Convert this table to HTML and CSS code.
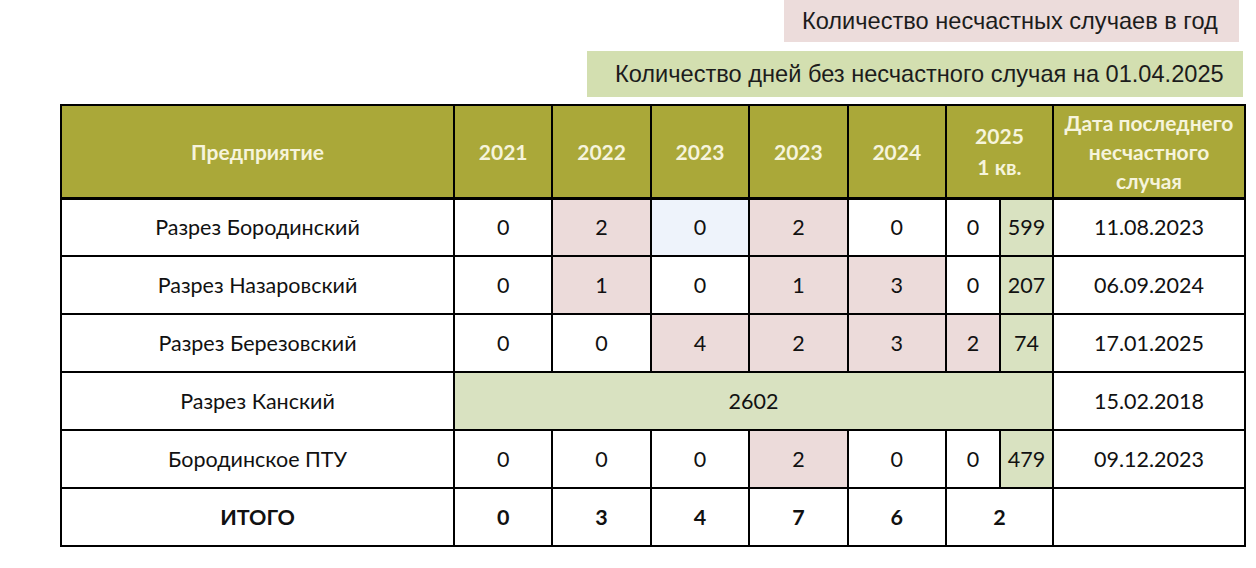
FILE: index.html
```html
<!DOCTYPE html>
<html lang="ru">
<head>
<meta charset="utf-8">
<title>Несчастные случаи</title>
<link rel="stylesheet" href="styles.css">
</head>
<body>
<div class="page">
  <div class="legend">
    <div class="legend-item legend-pink">Количество несчастных случаев в год</div>
    <div class="legend-item legend-green">Количество дней без несчастного случая на 01.04.2025</div>
  </div>
  <table class="stats">
    <colgroup>
      <col class="c-name">
      <col class="c-year"><col class="c-year"><col class="c-year"><col class="c-year"><col class="c-year">
      <col class="c-sub1"><col class="c-sub2">
      <col class="c-date">
    </colgroup>
    <thead>
      <tr>
        <th>Предприятие</th>
        <th>2021</th>
        <th>2022</th>
        <th>2023</th>
        <th>2023</th>
        <th>2024</th>
        <th colspan="2" class="th-q">2025<br>1 кв.</th>
        <th class="th-date">Дата последнего<br>несчастного<br>случая</th>
      </tr>
    </thead>
    <tbody>
      <tr>
        <td>Разрез Бородинский</td>
        <td>0</td><td class="pink">2</td><td class="blue">0</td><td class="pink">2</td><td>0</td>
        <td>0</td><td class="green">599</td>
        <td>11.08.2023</td>
      </tr>
      <tr>
        <td>Разрез Назаровский</td>
        <td>0</td><td class="pink">1</td><td>0</td><td class="pink">1</td><td class="pink">3</td>
        <td>0</td><td class="green">207</td>
        <td>06.09.2024</td>
      </tr>
      <tr>
        <td>Разрез Березовский</td>
        <td>0</td><td>0</td><td class="pink">4</td><td class="pink">2</td><td class="pink">3</td>
        <td class="pink">2</td><td class="green">74</td>
        <td>17.01.2025</td>
      </tr>
      <tr>
        <td>Разрез Канский</td>
        <td colspan="7" class="green span">2602</td>
        <td>15.02.2018</td>
      </tr>
      <tr>
        <td>Бородинское ПТУ</td>
        <td>0</td><td>0</td><td>0</td><td class="pink">2</td><td>0</td>
        <td>0</td><td class="green">479</td>
        <td>09.12.2023</td>
      </tr>
      <tr class="total">
        <td>ИТОГО</td>
        <td>0</td><td>3</td><td>4</td><td>7</td><td>6</td>
        <td colspan="2">2</td>
        <td></td>
      </tr>
    </tbody>
  </table>
</div>
</body>
</html>
```
FILE: styles.css
```css
html, body {
  margin: 0;
  padding: 0;
  background: #ffffff;
}

.page {
  width: 1256px;
  height: 568px;
  overflow: hidden;
}

.legend {
  display: flex;
  flex-direction: column;
  align-items: flex-end;
  padding-right: 13px;
  gap: 9px;
  font-family: "Liberation Sans", Arial, sans-serif;
  font-size: 23.6px;
  color: #1c1c1c;
}

.legend-item {
  height: 42px;
  display: flex;
  align-items: center;
  box-sizing: border-box;
  white-space: nowrap;
}

.legend-pink {
  background: #ecdcdb;
  width: 455px;
  padding-left: 18px;
  margin-right: 4px;
}

.legend-green {
  background: #d3dfb0;
  width: 656px;
  height: 46px;
  padding-left: 28px;
}

.stats {
  margin: 7px 0 0 60px;
  width: 1184px;
  table-layout: fixed;
  border-collapse: collapse;
  border: 2px solid #000;
  font-family: Lato, "Open Sans", sans-serif;
  font-size: 21.5px;
  color: #111;
}

.c-name { width: 393px; }
.c-year { width: 98.4px; }
.c-sub1 { width: 54px; }
.c-sub2 { width: 53px; }
.c-date { width: 192px; }

.stats th,
.stats td {
  border: 2px solid #000;
  text-align: center;
  vertical-align: middle;
  padding: 0;
}

.stats thead tr { height: 93px; }
.stats tbody tr { height: 58px; }

.stats th {
  background: #aaa839;
  color: #f6f4dc;
  font-weight: 700;
  font-size: 21px;
  line-height: 31px;
  border-bottom-width: 3px;
}

.stats th.th-q {
  line-height: 31px;
}

.stats th.th-date {
  line-height: 29px;
  white-space: nowrap;
}

.pink { background: #ecdbda; }
.green { background: #d9e2c1; }
.blue { background: #eef3fb; }

.span { padding-right: 110px; }

.total td { font-weight: 700; }
```
